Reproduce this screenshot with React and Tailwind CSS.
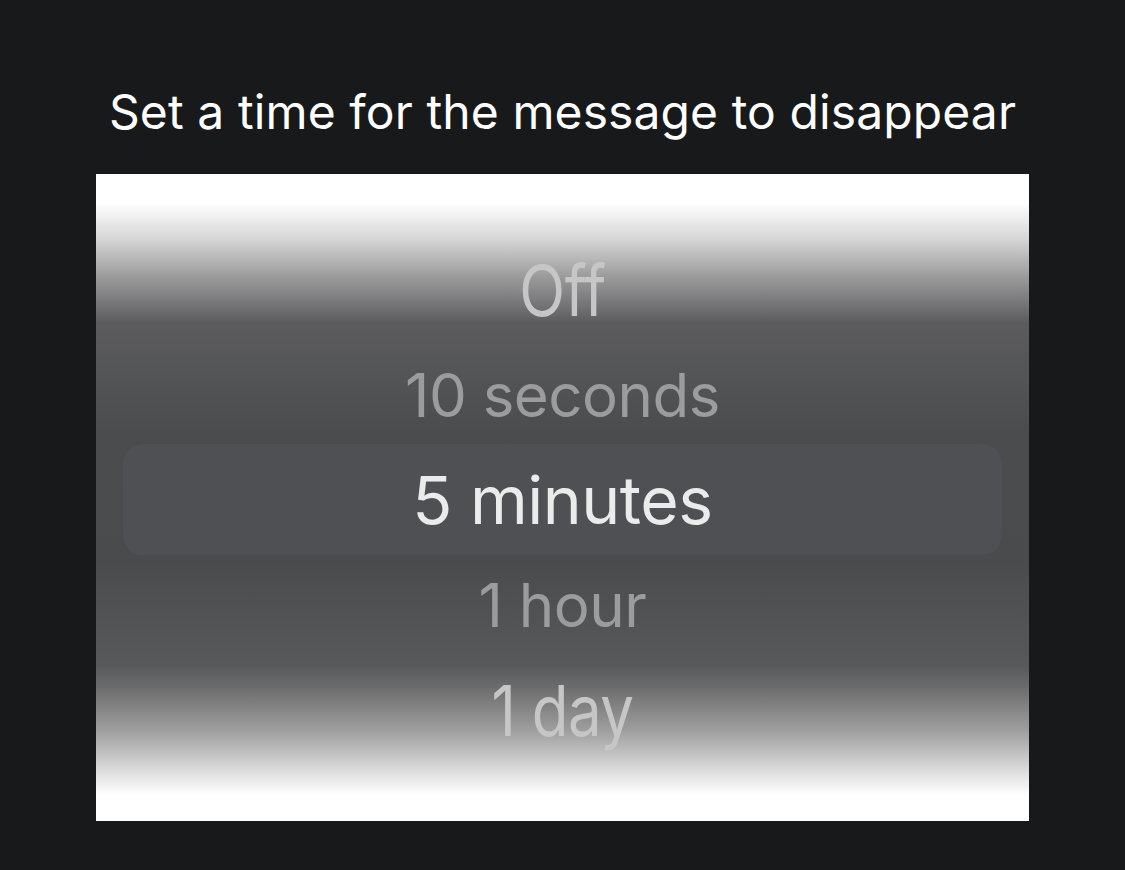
import React, { useState } from 'react';

const options = ['Off', '10 seconds', '5 minutes', '1 hour', '1 day'];

const DisappearPicker = () => {
  const [selected] = useState('5 minutes');

  const itemStyle = (option, index) => {
    if (option === selected) return 'text-[#ebebec] text-[66px]';
    if (index === 0 || index === 4) return 'text-[#c6c6c7] text-[60px] scale-y-[1.18]';
    return 'text-[#9c9c9e] text-[60px]';
  };

  return (
    <div className="w-[1125px] h-[870px] bg-[#18191b] flex flex-col items-center font-['Inter','Roboto',sans-serif]">
      <h1 className="mt-[82px] h-[60px] text-[48px] leading-[60px] text-white font-normal tracking-[0.1px]">
        Set a time for the message to disappear
      </h1>

      <div className="mt-[32px] w-[933px] h-[647px] bg-[linear-gradient(to_bottom,#ffffff_0%,#ffffff_4.5%,#d6d6d6_10%,#9a9a9b_16%,#5c5c5e_23%,#4b4c4e_40%,#4a4b4d_60%,#58595b_76%,#6a6a6b_79%,#9e9e9f_86%,#dadada_92%,#ffffff_96%,#ffffff_100%)] flex flex-col pt-[63px]">
        {options.map((option, index) => (
          <div
            key={option}
            className={`flex items-center justify-center ${
              option === selected ? 'mx-[27px] -my-[3px] h-[111px] bg-[#4f5054] rounded-[20px]' : 'h-[105px]'
            }`}
          >
            <span className={`inline-block leading-none tracking-[-0.5px] ${itemStyle(option, index)}`}>
              {option}
            </span>
          </div>
        ))}
      </div>
    </div>
  );
};

function App() {
  return <DisappearPicker />;
}

export default App;
